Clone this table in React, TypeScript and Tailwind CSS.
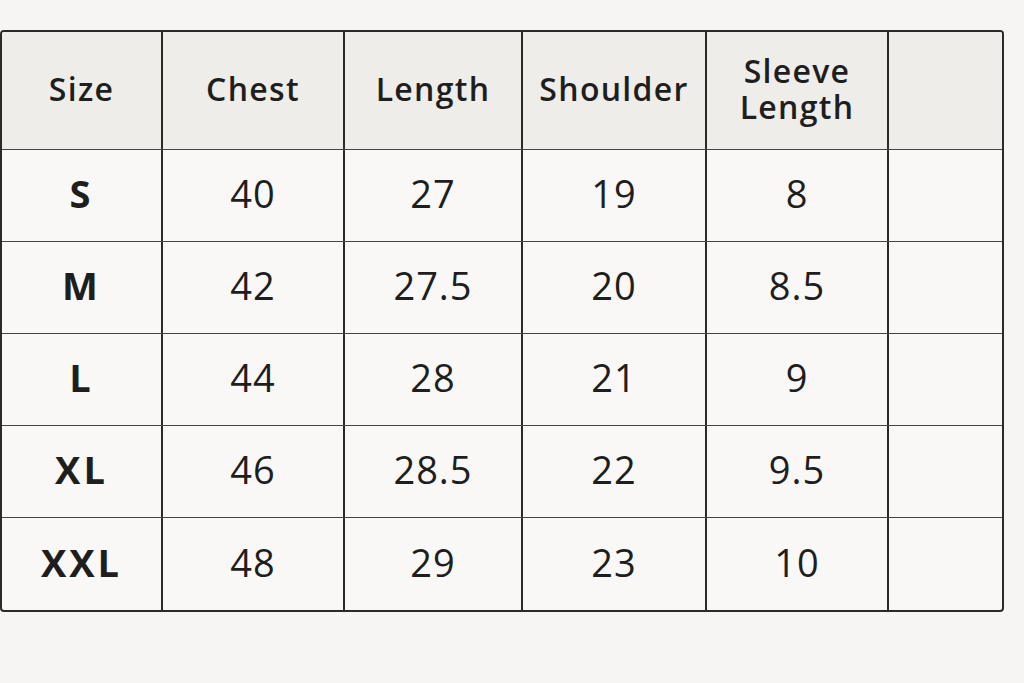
import React from 'react';

const headers = ['Size', 'Chest', 'Length', 'Shoulder', 'Sleeve Length', ''];

const rows = [
    ['S', '40', '27', '19', '8'],
    ['M', '42', '27.5', '20', '8.5'],
    ['L', '44', '28', '21', '9'],
    ['XL', '46', '28.5', '22', '9.5'],
    ['XXL', '48', '29', '23', '10'],
];

const cols = 'grid grid-cols-[161px_182px_178px_184px_182px_1fr]';

export default function App() {
    return (
        <div
            className="w-[1024px] h-[683px] bg-[#f6f5f3] pt-[30px] pr-[20px] text-[#1e1e1e]"
            style={{ fontFamily: '"Open Sans", "Noto Sans", sans-serif' }}
        >
            <div className="border-2 border-[#2a2a2a] rounded-[4px] overflow-hidden bg-[#f9f8f6]">
                {/* Header */}
                <div className={`${cols} h-[118px] bg-[#efedea] border-b-[1.5px] border-[#444]`}>
                    {headers.map((h, i) => (
                        <div
                            key={i}
                            className={`flex items-center justify-center text-center text-[32px] font-semibold leading-[36px] tracking-[1.3px] pb-[4px] ${
                                i < headers.length - 1 ? 'border-r-2 border-[#2a2a2a]' : ''
                            }`}
                        >
                            {h === 'Sleeve Length' ? (
                                <span className="flex flex-col">
                                    <span>Sleeve</span>
                                    <span>Length</span>
                                </span>
                            ) : (
                                h
                            )}
                        </div>
                    ))}
                </div>

                {/* Body */}
                {rows.map((r, ri) => (
                    <div
                        key={ri}
                        className={`${cols} h-[92px] ${ri < rows.length - 1 ? 'border-b-[1.5px] border-[#444]' : ''}`}
                    >
                        {[...r, ''].map((c, ci) => (
                            <div
                                key={ci}
                                className={`flex items-center justify-center text-[38px] pb-[4px] ${
                                    ci === 0 ? 'font-bold tracking-[3px]' : 'font-normal tracking-[1px]'
                                } ${ci < r.length ? 'border-r-2 border-[#2a2a2a]' : ''}`}
                            >
                                {c}
                            </div>
                        ))}
                    </div>
                ))}
            </div>
        </div>
    );
}
